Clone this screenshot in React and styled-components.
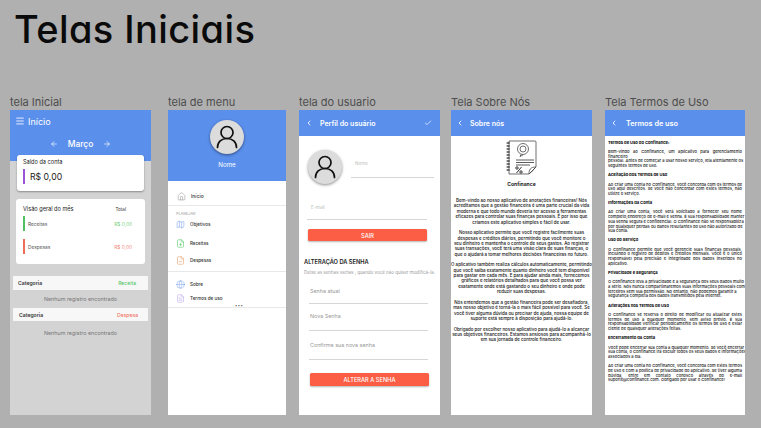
import React from "react";
import styled, { createGlobalStyle } from "styled-components";
import {
  ArrowLeft,
  ArrowRight,
  Check,
  ChevronLeft,
  FileMinus,
  FilePlus,
  FileText,
  Globe,
  Home,
  Map,
  Menu,
} from "lucide-react";

const BLUE = "#5b8fec";
const RED = "#fb5e44";

const GlobalStyle = createGlobalStyle`
  html, body {
    margin: 0;
    background: #b0b0b0;
    font-family: Inter, "Liberation Sans", sans-serif;
  }
`;

const Page = styled.div`
  width: 761px;
  height: 428px;
  overflow: hidden;
  padding-left: 10px;
  box-sizing: border-box;
`;

const Title = styled.h1`
  margin: 0;
  height: 94px;
  padding: 6px 0 0 4px;
  box-sizing: border-box;
  font-size: 38px;
  line-height: 46px;
  font-weight: 450;
  letter-spacing: 0.4px;
  color: #0a0a0a;
  font-feature-settings: "cv11";
`;

const Columns = styled.div`
  display: flex;
`;

const Column = styled.section`
  width: ${(p) => p.$w}px;
  margin-left: ${(p) => p.$ml || 0}px;
  flex: none;
`;

const Label = styled.div`
  height: 16px;
  line-height: 16px;
  font-size: 11px;
  color: #4d4d4d;
  white-space: nowrap;
`;

const Screen = styled.div`
  height: 305px;
  background: ${(p) => p.$bg || "#fff"};
  overflow: hidden;
`;

/* shared header of the inner pages */
const NavBar = styled.header`
  height: 26px;
  background: ${BLUE};
  color: #fff;
  display: flex;
  align-items: center;
  padding: 0 ${(p) => p.$pr || 6}px 0 ${(p) => p.$pl || 5}px;
  gap: ${(p) => p.$gap || 6}px;
  font-size: ${(p) => p.$size || 7}px;
  font-weight: 600;
`;

const NavTitle = styled.span`
  flex: 1;
`;

/* tela inicial */
const Hero = styled.div`
  height: 51px;
  background: ${BLUE};
  color: #fff;
`;

const HeroTop = styled.div`
  height: 22px;
  display: flex;
  align-items: center;
  gap: 3px;
  padding-left: 5px;
  font-size: 9px;
`;

const MonthBar = styled.div`
  height: 24px;
  display: flex;
  align-items: center;
  justify-content: center;
  gap: 10px;
  font-size: 8.5px;
  font-weight: 500;
`;

const BalanceCard = styled.div`
  height: 36px;
  margin: -6px 7px 0;
  padding: 4px 6px;
  box-sizing: border-box;
  background: #fff;
  border-radius: 3px;
  box-shadow: 0 1px 2px rgba(0, 0, 0, 0.35);
`;

const CardTitle = styled.div`
  font-size: 5.6px;
  line-height: 7px;
  color: #222;
`;

const BalanceRow = styled.div`
  display: flex;
  align-items: center;
  gap: 5px;
  margin-top: 3px;
  font-size: 8.7px;
  color: #222;
`;

const Mark = styled.i`
  display: block;
  flex: none;
  width: 2px;
  height: 15px;
  background: ${(p) => p.$c};
`;

const OverviewCard = styled.div`
  height: 65px;
  margin: 8px 6px 0;
  padding: 6px 7px;
  box-sizing: border-box;
  background: #fff;
  border-radius: 3px;
`;

const SplitRow = styled.div`
  display: flex;
  align-items: center;
  justify-content: space-between;
  height: ${(p) => p.$h || 8}px;
  margin-top: ${(p) => p.$mt || 0}px;
`;

const TotalLabel = styled.span`
  font-size: 4.6px;
  color: #333;
  margin-right: 12px;
`;

const EntryName = styled.span`
  flex: 1;
  margin-left: 3px;
  font-size: 4.8px;
  color: #555;
`;

const EntryValue = styled.span`
  font-size: 4.8px;
  color: ${(p) => p.$c};
  margin-right: 6px;
  opacity: 0.75;
`;

const CategoryRow = styled.div`
  height: ${(p) => p.$h}px;
  margin: ${(p) => p.$mt}px 3px 0;
  padding: 0 ${(p) => p.$pr}px 0 ${(p) => p.$pl}px;
  background: #f7f7f7;
  display: flex;
  align-items: center;
  justify-content: space-between;
  font-size: 5.1px;
`;

const CategoryName = styled.span`
  font-weight: 600;
  color: #333;
`;

const CategoryType = styled.span`
  color: ${(p) => p.$c};
`;

const Empty = styled.div`
  height: 18px;
  margin-top: ${(p) => p.$mt || 0}px;
  line-height: 18px;
  text-align: center;
  font-size: 5.4px;
  color: #777;
`;

/* tela de menu */
const MenuHero = styled.div`
  height: 71px;
  background: ${BLUE};
  color: #fff;
  padding-top: 10px;
  box-sizing: border-box;
  display: flex;
  flex-direction: column;
  align-items: center;
  font-size: 6.2px;
`;

const Avatar = styled.div`
  width: 34px;
  height: 34px;
  flex: none;
  border-radius: 50%;
  background: #dcdcdc;
  box-shadow: 0 1px 3px rgba(0, 0, 0, 0.45);
  display: flex;
  align-items: center;
  justify-content: center;
`;

const AvatarName = styled.div`
  margin-top: 7px;
  line-height: 8px;
`;

const MenuItem = styled.div`
  height: ${(p) => p.$h || 14}px;
  margin-top: ${(p) => p.$mt || 0}px;
  padding-left: ${(p) => p.$pl || 8}px;
  padding-top: ${(p) => p.$pt || 0}px;
  box-sizing: border-box;
  display: flex;
  align-items: center;
  gap: 5px;
  font-size: ${(p) => p.$size || 4.5}px;
  font-weight: 500;
  color: #333;
`;

const Divider = styled.div`
  height: 1px;
  background: #e8e8e8;
  margin-top: ${(p) => p.$mt || 0}px;
`;

const SectionHint = styled.div`
  margin: 5px 0 0 8px;
  font-size: 3.8px;
  line-height: 5px;
  color: #999;
`;

const More = styled.div`
  height: 3px;
  margin-top: -1px;
  line-height: 4px;
  font-size: 4px;
  letter-spacing: 0.5px;
  text-align: center;
  color: #555;
  transform: translateX(12px);
`;

/* tela do usuario */
const ProfileRow = styled.div`
  display: flex;
  padding: 14px 6px 0 9px;
  gap: 9px;
`;

const FieldStack = styled.div`
  flex: 1;
  padding-top: 11px;
`;

const Field = styled.div`
  height: ${(p) => p.$h}px;
  margin: ${(p) => p.$mt || 0}px ${(p) => p.$mr || 0}px 0 ${(p) => p.$ml || 0}px;
  border-bottom: 1px solid #d6d6d6;
  box-sizing: border-box;
  font-size: ${(p) => p.$size || 4.6}px;
  color: ${(p) => p.$c || "#c0c0c0"};
  line-height: 6px;
  padding-left: ${(p) => p.$pl || 0}px;
  padding-top: ${(p) => p.$pt || 0}px;
`;

const Action = styled.div`
  height: ${(p) => p.$h}px;
  margin: ${(p) => p.$mt}px ${(p) => p.$mr}px 0 ${(p) => p.$ml}px;
  border-radius: 1.5px;
  background: ${RED};
  box-shadow: 0 1px 2px rgba(0, 0, 0, 0.3);
  color: #fff;
  font-size: 5.7px;
  font-weight: 500;
  display: flex;
  align-items: center;
  justify-content: center;
`;

const SectionTitle = styled.div`
  margin: 17px 0 0 5px;
  font-size: 5.7px;
  line-height: 8px;
  font-weight: 600;
  color: #222;
`;

const Note = styled.div`
  margin: 4px 0 0 5px;
  font-size: 4.5px;
  line-height: 6px;
  color: #999;
  white-space: nowrap;
`;

/* tela sobre nos */
const LogoBlock = styled.div`
  display: flex;
  flex-direction: column;
  align-items: center;
  gap: 5px;
  padding-top: 4px;
  font-size: 5px;
  line-height: 7px;
  font-weight: 700;
  color: #222;
`;

const AboutText = styled.div`
  margin-top: 10px;
  text-align: center;
  font-size: 4.45px;
  line-height: 5.4px;
  font-weight: 500;
  color: #111;
  white-space: nowrap;
`;

const AboutParagraph = styled.div`
  margin: 0 0 5.1px;
`;

/* tela termos de uso */
const TermsBody = styled.div`
  padding: 0.2px 3px 0;
  font-size: 4.1px;
  line-height: 4.7px;
  font-weight: 500;
  color: #151515;
`;

const TermsHeading = styled.div`
  font-weight: 700;
  color: #000;
  margin: 4.4px 0 4.7px;
`;

const TermsLine = styled.div`
  white-space: nowrap;
  text-align: justify;
  text-align-last: ${(p) => (p.$fit ? "justify" : "left")};
  margin-top: ${(p) => p.$mt || 0}px;
`;

const PersonIcon = () => (
  <svg width="22" height="24" viewBox="0 0 22 24" fill="none" stroke="#111" strokeWidth="1.7" strokeLinecap="round">
    <circle cx="11" cy="7.5" r="6" />
    <path d="M1.5 22.5c0-5.5 4-9 9.5-9s9.500 3.500 9.500 9" />
  </svg>
);

const ConfinanceLogo = () => (
  <svg width="32" height="36" viewBox="0 0 32 36" fill="none" stroke="#333" strokeWidth="0.7">
    <path d="M3 1h26a1 1 0 0 1 1 1v25l-7 7H3z" fill="#fff" />
    <path d="M23 34c0-4 1-7 7-7M24 33c2-1 3-3 5-5" />
    {[3, 6, 9, 12, 15, 18, 21, 24, 27, 30].map((y) => (
      <path key={y} d="M0.600 0h3" transform={`translate(0 ${y})`} strokeWidth="1.300" />
    ))}
    <circle cx="17" cy="9" r="5.500" />
    <circle cx="17" cy="9" r="3" />
    <path d="M15 14.500l-1 2 3-1.500" />
    <path d="M10 20h18M10 22.500h18M10 25h14" strokeWidth="0.800" />
    <path d="M10.500 33l5-6" strokeWidth="1" />
    <circle cx="11" cy="28" r="1.200" strokeWidth="1" />
    <circle cx="15" cy="32" r="1.200" strokeWidth="1" />
  </svg>
);

const aboutText = [
  [
    "Bem-vindo ao nosso aplicativo de anotações financeiras! Nós",
    "acreditamos que a gestão financeira é uma parte crucial da vida",
    "moderna e que todo mundo deveria ter acesso a ferramentas",
    "eficazes para controlar suas finanças pessoais. É por isso que",
    "criamos este aplicativo simples e fácil de usar.",
  ],
  [
    "Nosso aplicativo permite que você registre facilmente suas",
    "despesas e créditos diários, permitindo que você monitore o",
    "seu dinheiro e mantenha o controle de seus gastos. Ao registrar",
    "suas transações, você terá uma visão clara de suas finanças, o",
    "que o ajudará a tomar melhores decisões financeiras no futuro.",
  ],
  [
    "O aplicativo também realiza cálculos automaticamente, permitindo",
    "que você saiba exatamente quanto dinheiro você tem disponível",
    "para gastar em cada mês. E para ajudar ainda mais, fornecemos",
    "gráficos e relatórios detalhados para que você possa ver",
    "exatamente onde está gastando o seu dinheiro e onde pode",
    "reduzir suas despesas.",
  ],
  [
    "Nós entendemos que a gestão financeira pode ser desafiadora,",
    "mas nosso objetivo é torná-la o mais fácil possível para você. Se",
    "você tiver alguma dúvida ou precisar de ajuda, nossa equipe de",
    "suporte está sempre à disposição para ajudá-lo.",
  ],
  [
    "Obrigado por escolher nosso aplicativo para ajudá-lo a alcançar",
    "seus objetivos financeiros. Estamos ansiosos para acompanhá-lo",
    "em sua jornada de controle financeiro.",
  ],
];

const termsText = [
  {
    title: "Termos de Uso do Confinance:",
    lines: [
      "Bem-vindo ao Confinance, um aplicativo para gerenciamento",
      "-financeiro",
      "-pessoal. Antes de começar a usar nosso serviço, leia atentamente os",
      "-seguintes termos de uso.",
    ],
  },
  {
    title: "Aceitação dos Termos de Uso",
    lines: [
      "Ao criar uma conta no Confinance, você concorda com os termos de",
      "uso aqui descritos. Se você não concordar com estes termos, não",
      "-utilize o serviço.",
    ],
  },
  {
    title: "Informações da Conta",
    lines: [
      "Ao criar uma conta, você será solicitado a fornecer seu nome",
      "completo,endereço de e-mail e senha. É sua responsabilidade manter",
      "sua senha segura e confidencial. O Confinance não se responsabiliza",
      "por quaisquer perdas ou danos resultantes do uso não autorizado de",
      "-sua conta.",
    ],
  },
  {
    title: "Uso do Serviço",
    lines: [
      "O Confinance permite que você gerencie suas finanças pessoais,",
      "incluindo o registro de débitos e créditos mensais. Você é o único",
      "responsável pela precisão e integridade dos dados inseridos no",
      "-aplicativo.",
    ],
  },
  {
    title: "Privacidade e Segurança",
    lines: [
      "O Confinance leva a privacidade e a segurança dos seus dados muito",
      "a sério. Nós nunca compartilharemos suas informações pessoais com",
      "-terceiros sem sua permissão. No entanto, não podemos garantir a",
      "-segurança completa dos dados transmitidos pela Internet.",
    ],
  },
  {
    title: "Alterações nos Termos de Uso",
    lines: [
      "O Confinance se reserva o direito de modificar ou atualizar estes",
      "termos de uso a qualquer momento, sem aviso prévio. É sua",
      "responsabilidade verificar periodicamente os termos de uso e estar",
      "-ciente de quaisquer alterações feitas.",
    ],
  },
  {
    title: "Encerramento da Conta",
    lines: [
      "Você pode encerrar sua conta a qualquer momento. Se você encerrar",
      "sua conta, o Confinance irá excluir todos os seus dados e informações",
      "-associados a ela.",
      "+Ao criar uma conta no Confinance, você concorda com estes termos",
      "de uso e com a política de privacidade do aplicativo. Se tiver alguma",
      "dúvida, entre em contato conosco através do e-mail",
      "-suporte@confinance.com. Obrigado por usar o Confinance!",
    ],
  },
];

function HomeScreen() {
  return (
    <Screen $bg="#d3d3d3">
      <Hero>
        <HeroTop>
          <Menu size={10} strokeWidth={2} />
          Início
        </HeroTop>
        <MonthBar>
          <ArrowLeft size={8} />
          Março
          <ArrowRight size={8} />
        </MonthBar>
      </Hero>
      <BalanceCard>
        <CardTitle>Saldo da conta</CardTitle>
        <BalanceRow>
          <Mark $c="#9a55d6" />
          R$ 0,00
        </BalanceRow>
      </BalanceCard>
      <OverviewCard>
        <SplitRow>
          <CardTitle>Visão geral do mês</CardTitle>
          <TotalLabel>Total</TotalLabel>
        </SplitRow>
        <SplitRow $h={15} $mt={3}>
          <Mark $c="#4fc25f" />
          <EntryName>Receitas</EntryName>
          <EntryValue $c="#3fc04f">R$ 0,00</EntryValue>
        </SplitRow>
        <SplitRow $h={15} $mt={8}>
          <Mark $c="#ee6e5a" />
          <EntryName>Despesas</EntryName>
          <EntryValue $c="#f0604a">R$ 0,00</EntryValue>
        </SplitRow>
      </OverviewCard>
      <CategoryRow $h={14} $mt={12} $pl={5} $pr={12}>
        <CategoryName>Categoria</CategoryName>
        <CategoryType $c="#45c35a">Receita</CategoryType>
      </CategoryRow>
      <Empty>Nenhum registro encontrado</Empty>
      <CategoryRow $h={13} $mt={0} $pl={6} $pr={10}>
        <CategoryName>Categoria</CategoryName>
        <CategoryType $c="#ee6a55">Despesa</CategoryType>
      </CategoryRow>
      <Empty $mt={3}>Nenhum registro encontrado</Empty>
    </Screen>
  );
}

function MenuScreen() {
  return (
    <Screen>
      <MenuHero>
        <Avatar>
          <PersonIcon />
        </Avatar>
        <AvatarName>Nome</AvatarName>
      </MenuHero>
      <MenuItem $h={24} $pt={6} $pl={9} $size={5}>
        <Home size={9} color="#888" strokeWidth={1.3} />
        Início
      </MenuItem>
      <Divider />
      <SectionHint>PLANEJAR</SectionHint>
      <MenuItem $mt={1}>
        <Map size={9} color="#6b96e6" strokeWidth={1.3} />
        Objetivos
      </MenuItem>
      <MenuItem $mt={5}>
        <FilePlus size={9} color="#46c45c" strokeWidth={1.4} />
        Receitas
      </MenuItem>
      <MenuItem $mt={3}>
        <FileMinus size={9} color="#e8945a" strokeWidth={1.4} />
        Despesas
      </MenuItem>
      <Divider $mt={4} />
      <MenuItem $mt={5} $size={4.6}>
        <Globe size={9} color="#6b96e6" strokeWidth={1.2} />
        Sobre
      </MenuItem>
      <MenuItem $size={4.6}>
        <FileText size={9} color="#b9a6e8" strokeWidth={1.4} />
        Termos de uso
      </MenuItem>
      <More>•••</More>
      <Divider />
    </Screen>
  );
}

function ProfileScreen() {
  return (
    <Screen>
      <NavBar $pl={6} $pr={8} $gap={7} $size={7}>
        <ChevronLeft size={8} strokeWidth={2.5} />
        <NavTitle>Perfil do usuário</NavTitle>
        <Check size={8} />
      </NavBar>
      <ProfileRow>
        <Avatar>
          <PersonIcon />
        </Avatar>
        <FieldStack>
          <Field $h={17} $pl={4}>
            Nome
          </Field>
        </FieldStack>
      </ProfileRow>
      <Field $h={24} $mt={12} $ml={8} $mr={13} $pl={4} $pt={9}>
        E-mail
      </Field>
      <Action $h={12} $mt={9} $ml={9} $mr={13}>
        SAIR
      </Action>
      <SectionTitle>ALTERAÇÃO DA SENHA</SectionTitle>
      <Note>Deixe as senhas vazias , quando você não quiser modificá-la.</Note>
      <Field $h={24} $mt={4} $ml={10} $mr={12} $pl={1} $pt={8} $size={5.4} $c="#999">
        Senha atual
      </Field>
      <Field $h={27} $ml={10} $mr={12} $pl={1} $pt={9} $size={5.4} $c="#999">
        Nova Senha
      </Field>
      <Field $h={29} $ml={10} $mr={12} $pl={1} $pt={11} $size={5.4} $c="#999">
        Confirme sua nova senha
      </Field>
      <Action $h={13} $mt={13} $ml={11} $mr={11}>
        ALTERAR A SENHA
      </Action>
    </Screen>
  );
}

function AboutScreen() {
  return (
    <Screen>
      <NavBar $gap={6}>
        <ChevronLeft size={8} strokeWidth={2.5} />
        <NavTitle>Sobre nós</NavTitle>
      </NavBar>
      <LogoBlock>
        <ConfinanceLogo />
        Confinance
      </LogoBlock>
      <AboutText>
        {aboutText.map((lines) => (
          <AboutParagraph key={lines[0]}>
            {lines.map((line) => (
              <div key={line}>{line}</div>
            ))}
          </AboutParagraph>
        ))}
      </AboutText>
    </Screen>
  );
}

function TermsScreen() {
  return (
    <Screen>
      <NavBar $gap={8} $size={7.3}>
        <ChevronLeft size={8} strokeWidth={2.5} />
        <NavTitle>Termos de uso</NavTitle>
      </NavBar>
      <TermsBody>
        {termsText.map((section) => (
          <div key={section.title}>
            <TermsHeading>{section.title}</TermsHeading>
            {section.lines.map((line) => (
              <TermsLine
                key={line}
                $fit={!/^[-+]/.test(line)}
                $mt={line[0] === "+" ? 4.6 : 0}
              >
                {line.replace(/^[-+]/, "")}
              </TermsLine>
            ))}
          </div>
        ))}
      </TermsBody>
    </Screen>
  );
}

export default function App() {
  return (
    <Page>
      <GlobalStyle />
      <Title>Telas Iniciais</Title>
      <Columns>
        <Column $w={141}>
          <Label>tela Inicial</Label>
          <HomeScreen />
        </Column>
        <Column $w={118} $ml={17}>
          <Label>tela de menu</Label>
          <MenuScreen />
        </Column>
        <Column $w={141} $ml={13}>
          <Label>tela do usuario</Label>
          <ProfileScreen />
        </Column>
        <Column $w={141} $ml={11}>
          <Label>Tela Sobre Nós</Label>
          <AboutScreen />
        </Column>
        <Column $w={140} $ml={13}>
          <Label>Tela Termos de Uso</Label>
          <TermsScreen />
        </Column>
      </Columns>
    </Page>
  );
}
